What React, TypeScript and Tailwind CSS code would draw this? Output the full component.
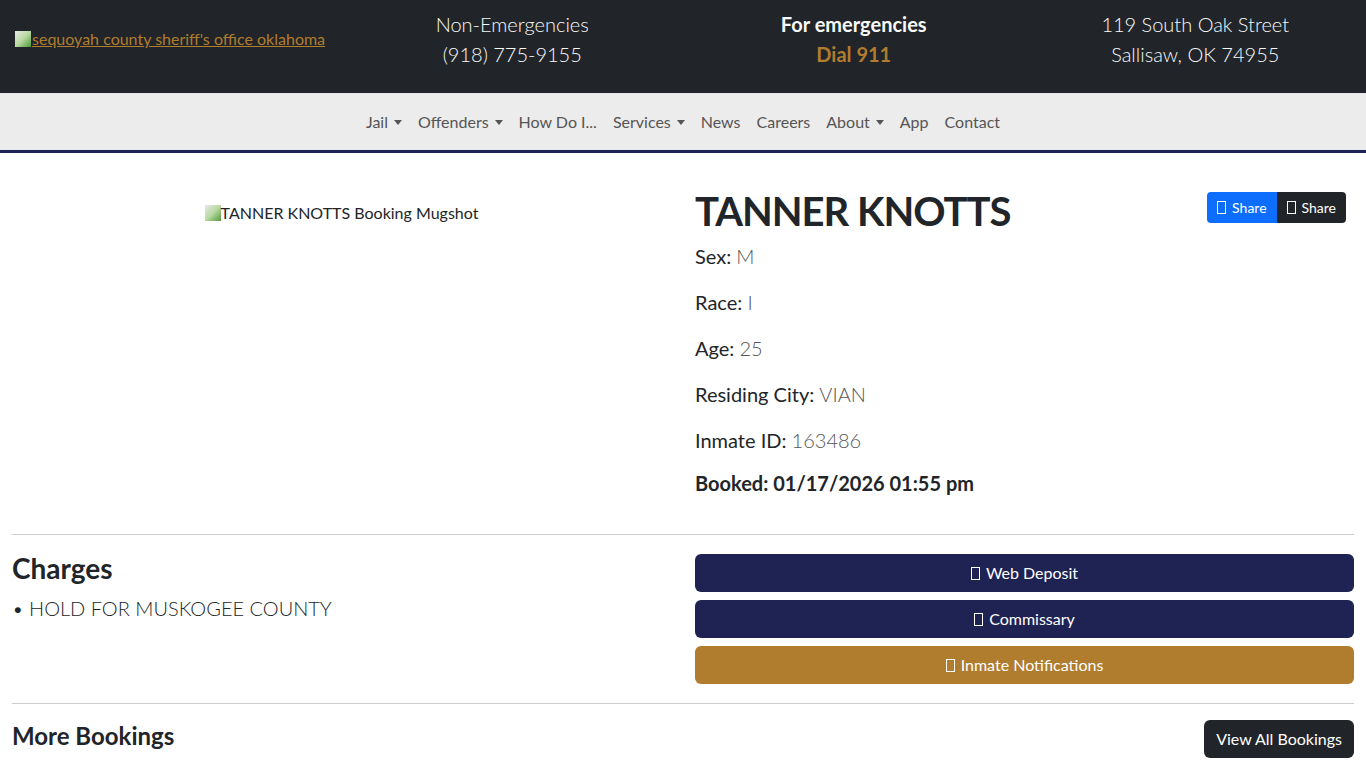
const font = { fontFamily: 'Lato, "Noto Sans", sans-serif' }

function Tofu({ className = '' }: { className?: string }) {
  return <span className={'inline-block h-[13px] w-[9px] border border-current align-[-1px] ' + className} />
}

function Caret() {
  return <span className="ml-[6px] inline-block h-0 w-0 border-x-[4px] border-t-[5px] border-x-transparent border-t-current align-[3px]" />
}

const navItems: [string, boolean][] = [
  ['Jail', true],
  ['Offenders', true],
  ['How Do I...', false],
  ['Services', true],
  ['News', false],
  ['Careers', false],
  ['About', true],
  ['App', false],
  ['Contact', false],
]

const fields = [
  ['Sex', 'M'],
  ['Race', 'I'],
  ['Age', '25'],
  ['Residing City', 'VIAN'],
  ['Inmate ID', '163486'],
]

export default function App() {
  return (
    <div className="min-h-screen bg-white text-[#212529]" style={font}>
      {/* header */}
      <header className="grid h-[93px] grid-cols-4 bg-[#212529] pt-[9px] text-[20px] leading-[30px] text-[#f8f9fa]">
        <div className="flex items-start pl-[15px] pt-[20px]">
          <a href="#" className="flex items-center text-[16px] leading-[20px] text-[#b07c2e] underline">
            <span className="mr-px inline-block h-[16px] w-[16px] bg-gradient-to-br from-[#e7e7e7] via-[#b9d9a0] to-[#4a9a3a]" />
            sequoyah county sheriff's office oklahoma
          </a>
        </div>
        <div className="text-center font-light">
          <div>Non-Emergencies</div>
          <div>(918) 775-9155</div>
        </div>
        <div className="text-center font-bold">
          <div>For emergencies</div>
          <div className="text-[#b07c2e]">Dial 911</div>
        </div>
        <div className="text-center font-light">
          <div>119 South Oak Street</div>
          <div>Sallisaw, OK 74955</div>
        </div>
      </header>

      {/* nav */}
      <nav className="border-t border-b-[3px] border-t-[#e8e6f5] border-b-[#1f2354] bg-[#ececec]">
        <div className="border-b border-[#e8e6f5]">
          <ul className="flex h-[55px] items-center justify-center text-[16px] text-[#555]">
            {navItems.map(([label, drop]) => (
              <li key={label} className="px-[8px]">
                {label}
                {drop && <Caret />}
              </li>
            ))}
          </ul>
        </div>
      </nav>

      {/* main */}
      <main className="px-[12px] pt-[30px]">
        <div className="grid grid-cols-2 gap-x-[24px]">
          <div className="flex justify-center pt-[18px]">
            <div className="flex h-[24px] items-center text-[16px]">
              <span className="inline-block h-[16px] w-[16px] bg-gradient-to-br from-[#e7e7e7] via-[#b9d9a0] to-[#4a9a3a]" />
              TANNER KNOTTS Booking Mugshot
            </div>
          </div>
          <div>
            <div className="flex items-start justify-between">
              <h1 className="text-[40px] font-bold leading-[56px] tracking-[-1px]">TANNER KNOTTS</h1>
              <div className="mr-[8px] mt-[9px] flex overflow-hidden rounded-[4px] text-[14px] leading-[31px] text-white">
                <span className="bg-[#0d6efd] px-[10px]">
                  <Tofu className="mr-[6px]" />
                  Share
                </span>
                <span className="bg-[#212529] px-[10px]">
                  <Tofu className="mr-[6px]" />
                  Share
                </span>
              </div>
            </div>
            <div className="mt-[2px] text-[20px] leading-[30px]">
              {fields.map(([k, v]) => (
                <p key={k} className="mb-[16px]">
                  {k}: <span className="font-light text-[#555]">{v}</span>
                </p>
              ))}
              <p className="-mt-[3px] font-bold">Booked: 01/17/2026 01:55 pm</p>
            </div>
          </div>
        </div>

        <hr className="mt-[36px] border-[#ccc]" />

        <div className="grid grid-cols-2 gap-x-[24px] pb-[19px] pt-[19px]">
          <div>
            <h2 className="-mt-[3px] text-[28px] font-bold leading-[34px]">Charges</h2>
            <p className="mt-[8px] text-[20px] font-light leading-[30px]">• HOLD FOR MUSKOGEE COUNTY</p>
          </div>
          <div className="flex flex-col gap-[8px] text-[16px] text-white">
            <button className="h-[38px] rounded-[6px] bg-[#1f2354]">
              <Tofu className="mr-[6px]" />
              Web Deposit
            </button>
            <button className="h-[38px] rounded-[6px] bg-[#1f2354]">
              <Tofu className="mr-[6px]" />
              Commissary
            </button>
            <button className="h-[38px] rounded-[6px] bg-[#b07c2e]">
              <Tofu className="mr-[6px]" />
              Inmate Notifications
            </button>
          </div>
        </div>

        <hr className="border-[#ccc]" />

        <div className="flex items-start justify-between pt-[16px]">
          <h3 className="text-[24px] font-bold leading-[32px]">More Bookings</h3>
          <button className="h-[38px] rounded-[6px] bg-[#212529] px-[12px] text-[16px] text-white">View All Bookings</button>
        </div>
      </main>
    </div>
  )
}
